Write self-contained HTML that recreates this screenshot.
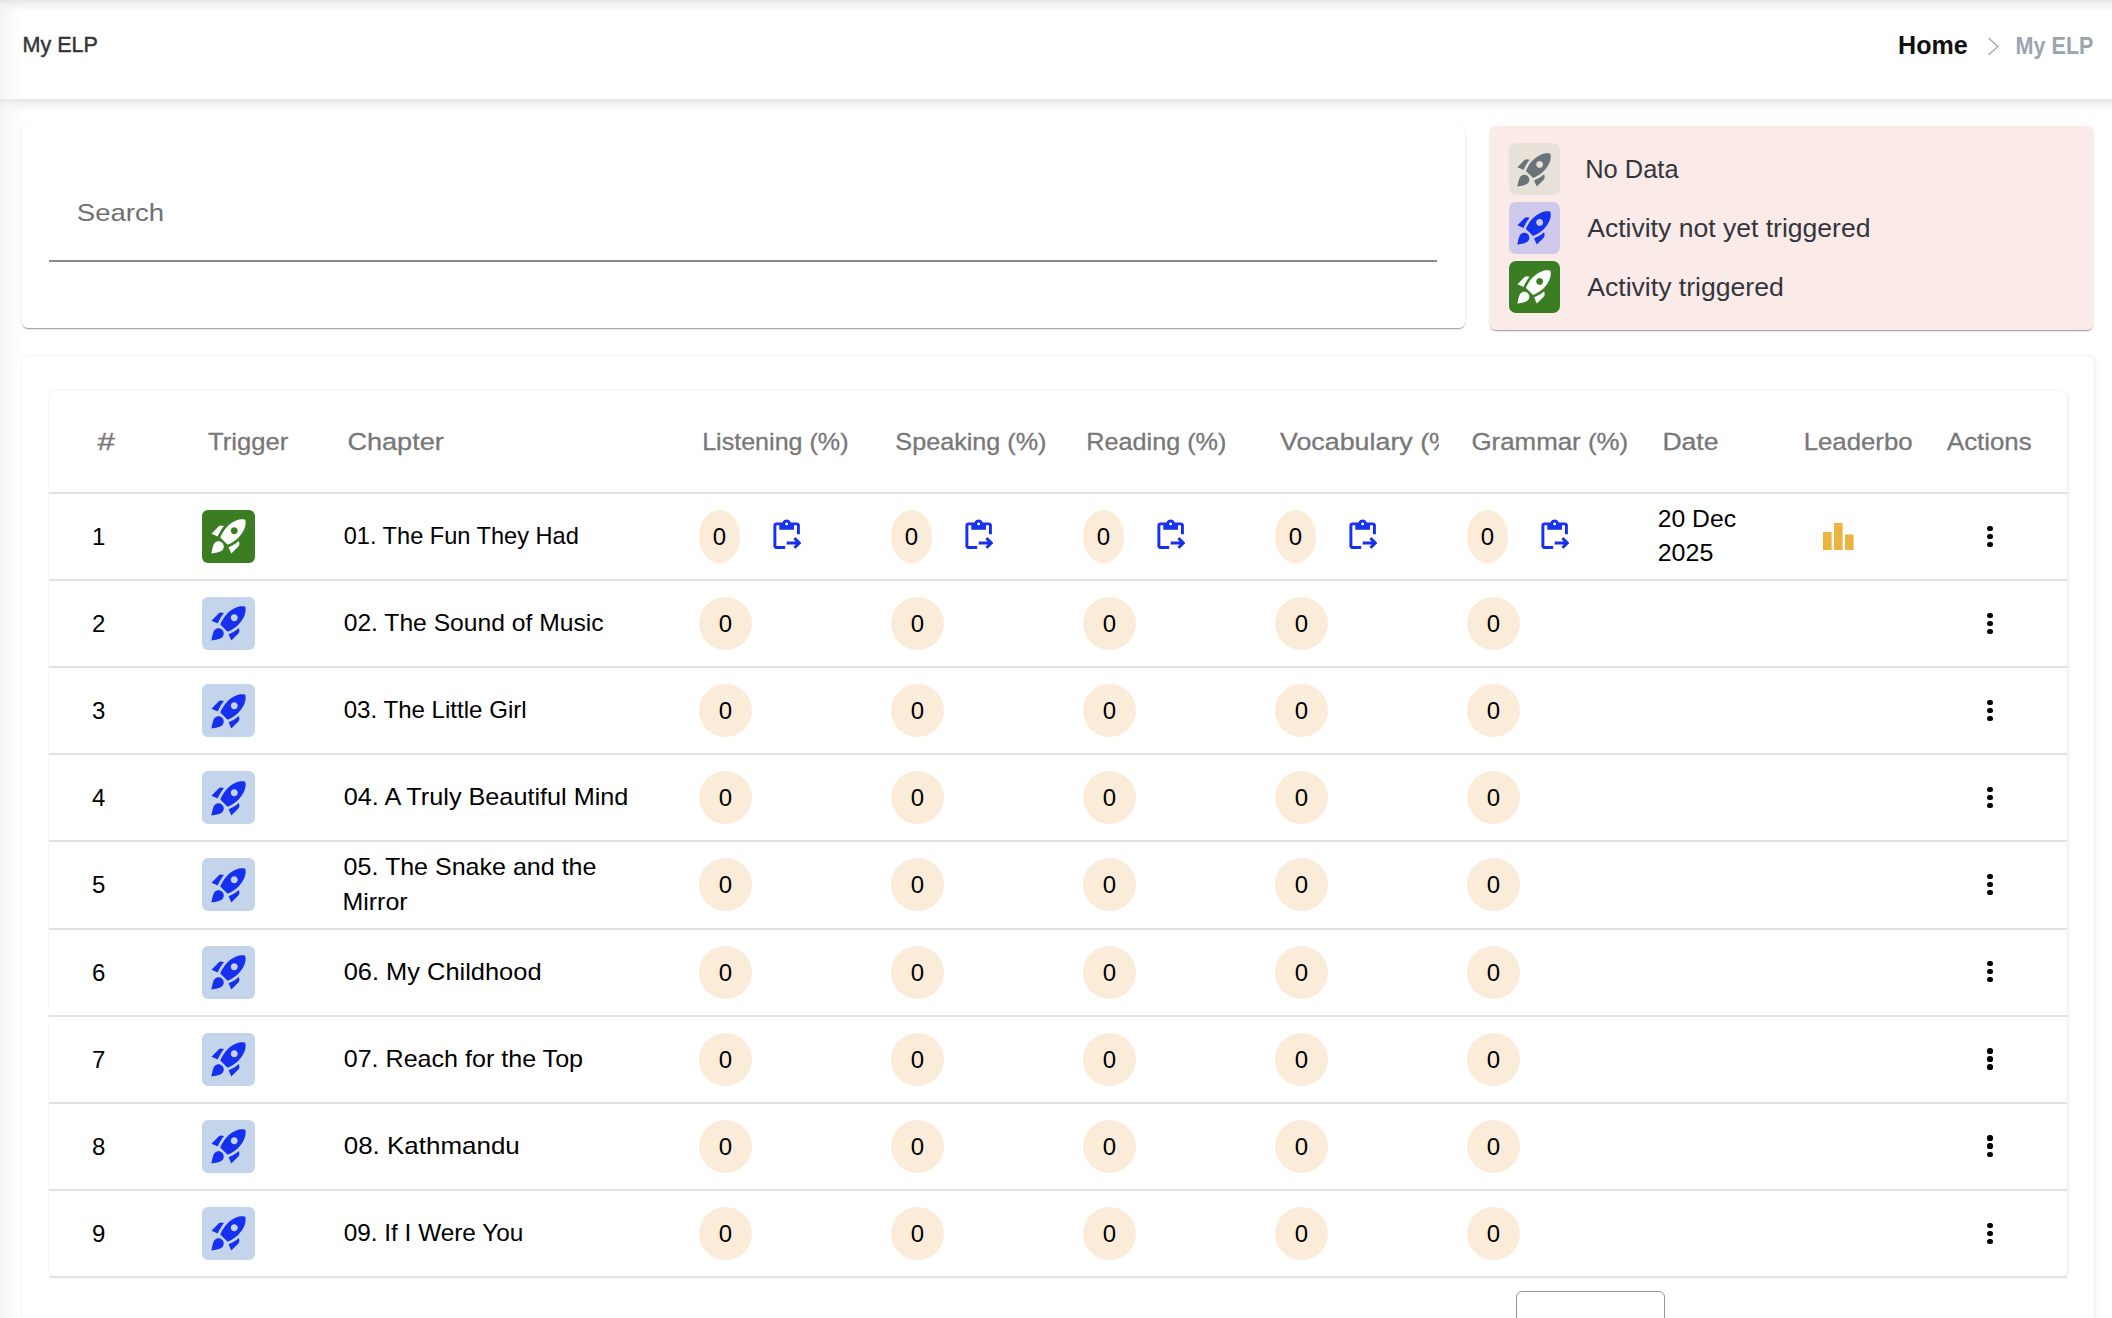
<!DOCTYPE html><html><head><meta charset="utf-8"><title>My ELP</title><style>
*{box-sizing:border-box;margin:0;padding:0}
html,body{width:2112px;height:1318px;overflow:hidden;background:#fff;font-family:"Liberation Sans",sans-serif;}
.abs{position:absolute}
.t{position:absolute;white-space:nowrap;transform-origin:0 0}
#topshade{left:0;top:0;width:2112px;height:12px;background:linear-gradient(#e4e5e6,#f1f1f1 35%,rgba(255,255,255,0));}
#leftshade{left:0;top:0;width:22px;height:1318px;background:linear-gradient(90deg,#f2f3f4,#f8f8f8 5px,#fcfcfc 14px,rgba(255,255,255,0));}
#hshade{left:0;top:99px;width:2112px;height:14px;background:linear-gradient(#e7e7e7,#f3f3f3 35%,rgba(255,255,255,0));}
.card{position:absolute;background:#fff;border-radius:6px;
  box-shadow:0px 2px 1px -1px rgba(0,0,0,0.2),0px 1px 1px 0px rgba(0,0,0,0.14),0px 1px 3px 0px rgba(0,0,0,0.12);}
#search{left:22px;top:125px;width:1443px;height:203px;}
#search .line{position:absolute;left:27px;top:135.4px;width:1388px;height:1.7px;background:#888}
#legend{left:1490px;top:126px;width:603px;height:204px;background:#fbebe8}
.lg{position:absolute;left:1509px;width:51px;height:51.5px;border-radius:7px;display:flex;align-items:center;justify-content:center}
.lgt{font-size:26px;color:#33363d;}
#outer{left:22px;top:355.5px;width:2071.5px;height:1000px;box-shadow:0 0 2px rgba(0,0,0,0.09),2px 1px 5px rgba(0,0,0,0.05);}
#inner{left:49px;top:391px;width:2018px;height:886px;box-shadow:0 0 2px rgba(0,0,0,0.09),2px 1px 5px rgba(0,0,0,0.05);}
.th{font-size:24.5px;color:#777;-webkit-text-stroke:0.3px #777;}
.hr{position:absolute;left:49px;width:2018px;height:2px;background:#e2e2e2}
.cell{font-size:24px;color:#000}
.trig{position:absolute;left:202px;width:53px;height:53px;border-radius:6px;display:flex;align-items:center;justify-content:center}
.badge{position:absolute;width:53px;height:53px;border-radius:50%;background:#fbecda;font-size:24px;color:#000;text-align:center;line-height:53px}
.badge.sq{width:41px}
.dot{position:absolute;width:5.2px;height:5.2px;border-radius:50%;background:#000}
#pager{left:1516px;top:1291px;width:149px;height:60px;border:1.8px solid #959595;border-radius:6px;background:#fff}
</style></head><body>
<div id="leftshade" class="abs"></div><div id="hshade" class="abs"></div><div id="topshade" class="abs"></div>
<div id="title" class="t" style="left:23px;top:31.7px;font-size:22.5px;font-weight:400;color:#333;-webkit-text-stroke:0.45px #333;transform:matrix(0.9584,0,0,1,-0.56,0);">My ELP</div>
<div id="home" class="t" style="left:1897px;top:31px;font-size:25px;font-weight:700;color:#111;transform:matrix(1.0029,0,0,1,1.10,0);">Home</div>
<svg class="abs" style="left:1986.5px;top:36.5px" width="13" height="19" viewBox="0 0 13 19"><path d="M1.5,1 L10.8,9.5 L1.5,18" fill="none" stroke="#a8b1b8" stroke-width="1.6"/></svg>
<div id="crumb" class="t" style="left:2016px;top:31.7px;font-size:24px;font-weight:700;color:#9aa5ae;transform:matrix(0.8976,0,0,1,-0.40,0);">My ELP</div>
<div id="search" class="card"><div class="line"></div></div>
<div id="srch" class="t" style="left:78px;top:199px;font-size:24.8px;color:#707070;transform:matrix(1.1118,0,0,1,-1.21,0);">Search</div>
<div id="legend" class="card"></div>
<div class="lg" style="top:143.4px;background:#e8e1d7"><svg width="41" height="41" viewBox="0 0 24 24" style="display:block"><path fill="#6b737a" fill-rule="evenodd" d="M9.19,6.35c-2.04,2.29-3.44,5.58-3.57,5.89L2,10.69l4.05-4.05c0.47-0.47,1.15-0.68,1.81-0.55L9.19,6.35L9.19,6.35z M11.17,17c0,0,3.74-1.55,5.89-3.7c5.4-5.4,4.5-9.62,4.21-10.57c-0.95-0.3-5.17-1.19-10.57,4.21C8.55,9.09,7,12.83,7,12.83L11.17,17z M17.65,14.81c-2.29,2.04-5.58,3.44-5.89,3.57L13.31,22l4.05-4.05c0.47-0.47,0.68-1.15,0.55-1.81L17.65,14.81L17.65,14.81z M9,18c0,0.83-0.34,1.58-0.88,2.12C6.94,21.3,2,22,2,22s0.7-4.94,1.88-6.12C4.42,15.34,5.17,15,6,15C7.66,15,9,16.34,9,18z M13,9c0-1.1,0.9-2,2-2s2,0.9,2,2s-0.9,2-2,2S13,10.1,13,9z"/></svg></div>
<div id="lg0" class="t lgt" style="left:1587px;top:154.4px;transform:matrix(0.9787,0,0,1,-1.76,0);">No Data</div>
<div class="lg" style="top:202.2px;background:#cfc9ec"><svg width="41" height="41" viewBox="0 0 24 24" style="display:block"><path fill="#1533ee" fill-rule="evenodd" d="M9.19,6.35c-2.04,2.29-3.44,5.58-3.57,5.89L2,10.69l4.05-4.05c0.47-0.47,1.15-0.68,1.81-0.55L9.19,6.35L9.19,6.35z M11.17,17c0,0,3.74-1.55,5.89-3.7c5.4-5.4,4.5-9.62,4.21-10.57c-0.95-0.3-5.17-1.19-10.57,4.21C8.55,9.09,7,12.83,7,12.83L11.17,17z M17.65,14.81c-2.29,2.04-5.58,3.44-5.89,3.57L13.31,22l4.05-4.05c0.47-0.47,0.68-1.15,0.55-1.81L17.65,14.81L17.65,14.81z M9,18c0,0.83-0.34,1.58-0.88,2.12C6.94,21.3,2,22,2,22s0.7-4.94,1.88-6.12C4.42,15.34,5.17,15,6,15C7.66,15,9,16.34,9,18z M13,9c0-1.1,0.9-2,2-2s2,0.9,2,2s-0.9,2-2,2S13,10.1,13,9z"/></svg></div>
<div id="lg1" class="t lgt" style="left:1587px;top:213.2px;transform:matrix(1.0210,0,0,1,0.20,0);">Activity not yet triggered</div>
<div class="lg" style="top:261px;background:#3b7d23"><svg width="41" height="41" viewBox="0 0 24 24" style="display:block"><path fill="#ffffff" fill-rule="evenodd" d="M9.19,6.35c-2.04,2.29-3.44,5.58-3.57,5.89L2,10.69l4.05-4.05c0.47-0.47,1.15-0.68,1.81-0.55L9.19,6.35L9.19,6.35z M11.17,17c0,0,3.74-1.55,5.89-3.7c5.4-5.4,4.5-9.62,4.21-10.57c-0.95-0.3-5.17-1.19-10.57,4.21C8.55,9.09,7,12.83,7,12.83L11.17,17z M17.65,14.81c-2.29,2.04-5.58,3.44-5.89,3.57L13.31,22l4.05-4.05c0.47-0.47,0.68-1.15,0.55-1.81L17.65,14.81L17.65,14.81z M9,18c0,0.83-0.34,1.58-0.88,2.12C6.94,21.3,2,22,2,22s0.7-4.94,1.88-6.12C4.42,15.34,5.17,15,6,15C7.66,15,9,16.34,9,18z M13,9c0-1.1,0.9-2,2-2s2,0.9,2,2s-0.9,2-2,2S13,10.1,13,9z"/></svg></div>
<div id="lg2" class="t lgt" style="left:1587px;top:272px;transform:matrix(1.0230,0,0,1,0.20,0);">Activity triggered</div>
<div id="outer" class="card"></div>
<div id="inner" class="card"></div>
<div id="h0" class="t th" style="left:97px;top:428px;transform:matrix(1.2786,0,0,1,0.60,0);">#</div>
<div id="h1" class="t th" style="left:207px;top:428px;transform:matrix(1.0455,0,0,1,1.00,0);">Trigger</div>
<div id="h2" class="t th" style="left:348px;top:428px;transform:matrix(1.1058,0,0,1,-0.61,0);">Chapter</div>
<div id="h3" class="t th" style="left:704px;top:428px;transform:matrix(1.0236,0,0,1,-1.85,0);">Listening (%)</div>
<div id="h4" class="t th" style="left:896px;top:428px;transform:matrix(1.0269,0,0,1,-0.63,0);">Speaking (%)</div>
<div id="h5" class="t th" style="left:1088px;top:428px;transform:matrix(1.0286,0,0,1,-1.66,0);">Reading (%)</div>
<div class="abs" style="left:1270px;top:420px;width:169px;height:40px;overflow:hidden"><div id="h6" class="t th" style="left:10.4px;top:8px;transform:matrix(1.095,0,0,1,0.0,0)">Vocabulary (%)</div></div>
<div id="h7" class="t th" style="left:1472px;top:428px;transform:matrix(1.0562,0,0,1,-0.56,0);">Grammar (%)</div>
<div id="h8" class="t th" style="left:1664px;top:428px;transform:matrix(1.0837,0,0,1,-1.57,0);">Date</div>
<div id="h9" class="t th" style="left:1805px;top:428px;transform:matrix(1.0515,0,0,1,-1.30,0);">Leaderbo</div>
<div id="h10" class="t th" style="left:1946px;top:428px;transform:matrix(1.0544,0,0,1,0.90,0);">Actions</div>
<div class="hr" style="top:491.8px"></div>
<div id="n0" class="t cell" style="left:92px;top:527.8px;line-height:17px;">1</div>
<div class="trig" style="top:509.8px;background:#3b7d23"><svg width="42" height="42" viewBox="0 0 24 24" style="display:block"><path fill="#fff" fill-rule="evenodd" d="M9.19,6.35c-2.04,2.29-3.44,5.58-3.57,5.89L2,10.69l4.05-4.05c0.47-0.47,1.15-0.68,1.81-0.55L9.19,6.35L9.19,6.35z M11.17,17c0,0,3.74-1.55,5.89-3.7c5.4-5.4,4.5-9.62,4.21-10.57c-0.95-0.3-5.17-1.19-10.57,4.21C8.55,9.09,7,12.83,7,12.83L11.17,17z M17.65,14.81c-2.29,2.04-5.58,3.44-5.89,3.57L13.31,22l4.05-4.05c0.47-0.47,0.68-1.15,0.55-1.81L17.65,14.81L17.65,14.81z M9,18c0,0.83-0.34,1.58-0.88,2.12C6.94,21.3,2,22,2,22s0.7-4.94,1.88-6.12C4.42,15.34,5.17,15,6,15C7.66,15,9,16.34,9,18z M13,9c0-1.1,0.9-2,2-2s2,0.9,2,2s-0.9,2-2,2S13,10.1,13,9z"/></svg></div>
<div id="c0" class="t cell" style="left:343px;top:518.8px;line-height:34.5px;transform:matrix(0.9828,0,0,1,0.70,0);">01. The Fun They Had</div>
<div class="badge sq" style="left:699px;top:509.8px">0</div>
<div class="abs" style="left:769.4px;top:518.4px"><svg width="35.3" height="35.3" viewBox="0 0 24 24" style="display:block"><path fill="#1530ee" fill-rule="evenodd" d="M5,5h2v3h10V5h2v6h2V5c0-1.1-0.9-2-2-2h-4.18C14.4,1.84,13.3,1,12,1S9.6,1.84,9.18,3H5C3.9,3,3,3.9,3,5v14c0,1.1,0.9,2,2,2h6v-2H5V5z M12,5c-0.55,0-1-0.45-1-1s0.45-1,1-1s1,0.45,1,1S12.55,5,12,5z M18.01,13l-1.42,1.41l1.57,1.58H12v2h6.18l-1.58,1.58l1.42,1.42l3.99-4.01L18.01,13z"/></svg></div>
<div class="badge sq" style="left:891px;top:509.8px">0</div>
<div class="abs" style="left:961.4px;top:518.4px"><svg width="35.3" height="35.3" viewBox="0 0 24 24" style="display:block"><path fill="#1530ee" fill-rule="evenodd" d="M5,5h2v3h10V5h2v6h2V5c0-1.1-0.9-2-2-2h-4.18C14.4,1.84,13.3,1,12,1S9.6,1.84,9.18,3H5C3.9,3,3,3.9,3,5v14c0,1.1,0.9,2,2,2h6v-2H5V5z M12,5c-0.55,0-1-0.45-1-1s0.45-1,1-1s1,0.45,1,1S12.55,5,12,5z M18.01,13l-1.42,1.41l1.57,1.58H12v2h6.18l-1.58,1.58l1.42,1.42l3.99-4.01L18.01,13z"/></svg></div>
<div class="badge sq" style="left:1083px;top:509.8px">0</div>
<div class="abs" style="left:1153.4px;top:518.4px"><svg width="35.3" height="35.3" viewBox="0 0 24 24" style="display:block"><path fill="#1530ee" fill-rule="evenodd" d="M5,5h2v3h10V5h2v6h2V5c0-1.1-0.9-2-2-2h-4.18C14.4,1.84,13.3,1,12,1S9.6,1.84,9.18,3H5C3.9,3,3,3.9,3,5v14c0,1.1,0.9,2,2,2h6v-2H5V5z M12,5c-0.55,0-1-0.45-1-1s0.45-1,1-1s1,0.45,1,1S12.55,5,12,5z M18.01,13l-1.42,1.41l1.57,1.58H12v2h6.18l-1.58,1.58l1.42,1.42l3.99-4.01L18.01,13z"/></svg></div>
<div class="badge sq" style="left:1275px;top:509.8px">0</div>
<div class="abs" style="left:1345.4px;top:518.4px"><svg width="35.3" height="35.3" viewBox="0 0 24 24" style="display:block"><path fill="#1530ee" fill-rule="evenodd" d="M5,5h2v3h10V5h2v6h2V5c0-1.1-0.9-2-2-2h-4.18C14.4,1.84,13.3,1,12,1S9.6,1.84,9.18,3H5C3.9,3,3,3.9,3,5v14c0,1.1,0.9,2,2,2h6v-2H5V5z M12,5c-0.55,0-1-0.45-1-1s0.45-1,1-1s1,0.45,1,1S12.55,5,12,5z M18.01,13l-1.42,1.41l1.57,1.58H12v2h6.18l-1.58,1.58l1.42,1.42l3.99-4.01L18.01,13z"/></svg></div>
<div class="badge sq" style="left:1467px;top:509.8px">0</div>
<div class="abs" style="left:1537.4px;top:518.4px"><svg width="35.3" height="35.3" viewBox="0 0 24 24" style="display:block"><path fill="#1530ee" fill-rule="evenodd" d="M5,5h2v3h10V5h2v6h2V5c0-1.1-0.9-2-2-2h-4.18C14.4,1.84,13.3,1,12,1S9.6,1.84,9.18,3H5C3.9,3,3,3.9,3,5v14c0,1.1,0.9,2,2,2h6v-2H5V5z M12,5c-0.55,0-1-0.45-1-1s0.45-1,1-1s1,0.45,1,1S12.55,5,12,5z M18.01,13l-1.42,1.41l1.57,1.58H12v2h6.18l-1.58,1.58l1.42,1.42l3.99-4.01L18.01,13z"/></svg></div>
<div id="d0" class="t cell" style="left:1658px;top:501.8px;line-height:34.5px;transform:matrix(1.0300,0,0,1,-0.28,0);">20 Dec</div>
<div id="d1" class="t cell" style="left:1658px;top:536.3px;line-height:34.5px;transform:matrix(1.0413,0,0,1,-0.29,0);">2025</div>
<svg class="abs" style="left:1823px;top:522.8px" width="31" height="27" viewBox="0 0 31 27"><rect x="0" y="9" width="8.6" height="18" fill="#ebb440"/><rect x="11" y="0" width="8.6" height="27" fill="#ebb440"/><rect x="22" y="11.5" width="8.6" height="15.5" fill="#ebb440"/></svg>
<div class="dot" style="left:1987.4px;top:525.50px"></div>
<div class="dot" style="left:1987.4px;top:533.50px"></div>
<div class="dot" style="left:1987.4px;top:541.60px"></div>
<div class="hr" style="top:578.94px"></div>
<div id="n1" class="t cell" style="left:92px;top:614.94px;line-height:17px;">2</div>
<div class="trig" style="top:596.94px;background:#c4d4ea"><svg width="42" height="42" viewBox="0 0 24 24" style="display:block"><path fill="#1530ee" fill-rule="evenodd" d="M9.19,6.35c-2.04,2.29-3.44,5.58-3.57,5.89L2,10.69l4.05-4.05c0.47-0.47,1.15-0.68,1.81-0.55L9.19,6.35L9.19,6.35z M11.17,17c0,0,3.74-1.55,5.89-3.7c5.4-5.4,4.5-9.62,4.21-10.57c-0.95-0.3-5.17-1.19-10.57,4.21C8.55,9.09,7,12.83,7,12.83L11.17,17z M17.65,14.81c-2.29,2.04-5.58,3.44-5.89,3.57L13.31,22l4.05-4.05c0.47-0.47,0.68-1.15,0.55-1.81L17.65,14.81L17.65,14.81z M9,18c0,0.83-0.34,1.58-0.88,2.12C6.94,21.3,2,22,2,22s0.7-4.94,1.88-6.12C4.42,15.34,5.17,15,6,15C7.66,15,9,16.34,9,18z M13,9c0-1.1,0.9-2,2-2s2,0.9,2,2s-0.9,2-2,2S13,10.1,13,9z"/></svg></div>
<div id="c1" class="t cell" style="left:343px;top:605.94px;line-height:34.5px;transform:matrix(1.0269,0,0,1,0.70,0);">02. The Sound of Music</div>
<div class="badge" style="left:699px;top:596.94px">0</div>
<div class="badge" style="left:891px;top:596.94px">0</div>
<div class="badge" style="left:1083px;top:596.94px">0</div>
<div class="badge" style="left:1275px;top:596.94px">0</div>
<div class="badge" style="left:1467px;top:596.94px">0</div>
<div class="dot" style="left:1987.4px;top:612.64px"></div>
<div class="dot" style="left:1987.4px;top:620.64px"></div>
<div class="dot" style="left:1987.4px;top:628.74px"></div>
<div class="hr" style="top:666.08px"></div>
<div id="n2" class="t cell" style="left:92px;top:702.08px;line-height:17px;">3</div>
<div class="trig" style="top:684.08px;background:#c4d4ea"><svg width="42" height="42" viewBox="0 0 24 24" style="display:block"><path fill="#1530ee" fill-rule="evenodd" d="M9.19,6.35c-2.04,2.29-3.44,5.58-3.57,5.89L2,10.69l4.05-4.05c0.47-0.47,1.15-0.68,1.81-0.55L9.19,6.35L9.19,6.35z M11.17,17c0,0,3.74-1.55,5.89-3.7c5.4-5.4,4.5-9.62,4.21-10.57c-0.95-0.3-5.17-1.19-10.57,4.21C8.55,9.09,7,12.83,7,12.83L11.17,17z M17.65,14.81c-2.29,2.04-5.58,3.44-5.89,3.57L13.31,22l4.05-4.05c0.47-0.47,0.68-1.15,0.55-1.81L17.65,14.81L17.65,14.81z M9,18c0,0.83-0.34,1.58-0.88,2.12C6.94,21.3,2,22,2,22s0.7-4.94,1.88-6.12C4.42,15.34,5.17,15,6,15C7.66,15,9,16.34,9,18z M13,9c0-1.1,0.9-2,2-2s2,0.9,2,2s-0.9,2-2,2S13,10.1,13,9z"/></svg></div>
<div id="c2" class="t cell" style="left:343px;top:693.08px;line-height:34.5px;transform:matrix(1.0033,0,0,1,0.70,0);">03. The Little Girl</div>
<div class="badge" style="left:699px;top:684.08px">0</div>
<div class="badge" style="left:891px;top:684.08px">0</div>
<div class="badge" style="left:1083px;top:684.08px">0</div>
<div class="badge" style="left:1275px;top:684.08px">0</div>
<div class="badge" style="left:1467px;top:684.08px">0</div>
<div class="dot" style="left:1987.4px;top:699.78px"></div>
<div class="dot" style="left:1987.4px;top:707.78px"></div>
<div class="dot" style="left:1987.4px;top:715.88px"></div>
<div class="hr" style="top:753.22px"></div>
<div id="n3" class="t cell" style="left:92px;top:789.22px;line-height:17px;">4</div>
<div class="trig" style="top:771.22px;background:#c4d4ea"><svg width="42" height="42" viewBox="0 0 24 24" style="display:block"><path fill="#1530ee" fill-rule="evenodd" d="M9.19,6.35c-2.04,2.29-3.44,5.58-3.57,5.89L2,10.69l4.05-4.05c0.47-0.47,1.15-0.68,1.81-0.55L9.19,6.35L9.19,6.35z M11.17,17c0,0,3.74-1.55,5.89-3.7c5.4-5.4,4.5-9.62,4.21-10.57c-0.95-0.3-5.17-1.19-10.57,4.21C8.55,9.09,7,12.83,7,12.83L11.17,17z M17.65,14.81c-2.29,2.04-5.58,3.44-5.89,3.57L13.31,22l4.05-4.05c0.47-0.47,0.68-1.15,0.55-1.81L17.65,14.81L17.65,14.81z M9,18c0,0.83-0.34,1.58-0.88,2.12C6.94,21.3,2,22,2,22s0.7-4.94,1.88-6.12C4.42,15.34,5.17,15,6,15C7.66,15,9,16.34,9,18z M13,9c0-1.1,0.9-2,2-2s2,0.9,2,2s-0.9,2-2,2S13,10.1,13,9z"/></svg></div>
<div id="c3" class="t cell" style="left:343px;top:780.22px;line-height:34.5px;transform:matrix(1.0511,0,0,1,0.70,0);">04. A Truly Beautiful Mind</div>
<div class="badge" style="left:699px;top:771.22px">0</div>
<div class="badge" style="left:891px;top:771.22px">0</div>
<div class="badge" style="left:1083px;top:771.22px">0</div>
<div class="badge" style="left:1275px;top:771.22px">0</div>
<div class="badge" style="left:1467px;top:771.22px">0</div>
<div class="dot" style="left:1987.4px;top:786.92px"></div>
<div class="dot" style="left:1987.4px;top:794.92px"></div>
<div class="dot" style="left:1987.4px;top:803.02px"></div>
<div class="hr" style="top:840.36px"></div>
<div id="n4" class="t cell" style="left:92px;top:876.36px;line-height:17px;">5</div>
<div class="trig" style="top:858.36px;background:#c4d4ea"><svg width="42" height="42" viewBox="0 0 24 24" style="display:block"><path fill="#1530ee" fill-rule="evenodd" d="M9.19,6.35c-2.04,2.29-3.44,5.58-3.57,5.89L2,10.69l4.05-4.05c0.47-0.47,1.15-0.68,1.81-0.55L9.19,6.35L9.19,6.35z M11.17,17c0,0,3.74-1.55,5.89-3.7c5.4-5.4,4.5-9.62,4.21-10.57c-0.95-0.3-5.17-1.19-10.57,4.21C8.55,9.09,7,12.83,7,12.83L11.17,17z M17.65,14.81c-2.29,2.04-5.58,3.44-5.89,3.57L13.31,22l4.05-4.05c0.47-0.47,0.68-1.15,0.55-1.81L17.65,14.81L17.65,14.81z M9,18c0,0.83-0.34,1.58-0.88,2.12C6.94,21.3,2,22,2,22s0.7-4.94,1.88-6.12C4.42,15.34,5.17,15,6,15C7.66,15,9,16.34,9,18z M13,9c0-1.1,0.9-2,2-2s2,0.9,2,2s-0.9,2-2,2S13,10.1,13,9z"/></svg></div>
<div id="c4" class="t cell" style="left:343px;top:850.36px;line-height:34.5px;transform:matrix(1.0430,0,0,1,0.60,0);">05. The Snake and the</div>
<div id="c4b" class="t cell" style="left:343px;top:884.86px;line-height:34.5px;transform:matrix(1.0371,0,0,1,-0.44,0);">Mirror</div>
<div class="badge" style="left:699px;top:858.36px">0</div>
<div class="badge" style="left:891px;top:858.36px">0</div>
<div class="badge" style="left:1083px;top:858.36px">0</div>
<div class="badge" style="left:1275px;top:858.36px">0</div>
<div class="badge" style="left:1467px;top:858.36px">0</div>
<div class="dot" style="left:1987.4px;top:874.06px"></div>
<div class="dot" style="left:1987.4px;top:882.06px"></div>
<div class="dot" style="left:1987.4px;top:890.16px"></div>
<div class="hr" style="top:927.50px"></div>
<div id="n5" class="t cell" style="left:92px;top:963.5px;line-height:17px;">6</div>
<div class="trig" style="top:945.5px;background:#c4d4ea"><svg width="42" height="42" viewBox="0 0 24 24" style="display:block"><path fill="#1530ee" fill-rule="evenodd" d="M9.19,6.35c-2.04,2.29-3.44,5.58-3.57,5.89L2,10.69l4.05-4.05c0.47-0.47,1.15-0.68,1.81-0.55L9.19,6.35L9.19,6.35z M11.17,17c0,0,3.74-1.55,5.89-3.7c5.4-5.4,4.5-9.62,4.21-10.57c-0.95-0.3-5.17-1.19-10.57,4.21C8.55,9.09,7,12.83,7,12.83L11.17,17z M17.65,14.81c-2.29,2.04-5.58,3.44-5.89,3.57L13.31,22l4.05-4.05c0.47-0.47,0.68-1.15,0.55-1.81L17.65,14.81L17.65,14.81z M9,18c0,0.83-0.34,1.58-0.88,2.12C6.94,21.3,2,22,2,22s0.7-4.94,1.88-6.12C4.42,15.34,5.17,15,6,15C7.66,15,9,16.34,9,18z M13,9c0-1.1,0.9-2,2-2s2,0.9,2,2s-0.9,2-2,2S13,10.1,13,9z"/></svg></div>
<div id="c5" class="t cell" style="left:343px;top:954.5px;line-height:34.5px;transform:matrix(1.0591,0,0,1,0.70,0);">06. My Childhood</div>
<div class="badge" style="left:699px;top:945.5px">0</div>
<div class="badge" style="left:891px;top:945.5px">0</div>
<div class="badge" style="left:1083px;top:945.5px">0</div>
<div class="badge" style="left:1275px;top:945.5px">0</div>
<div class="badge" style="left:1467px;top:945.5px">0</div>
<div class="dot" style="left:1987.4px;top:961.20px"></div>
<div class="dot" style="left:1987.4px;top:969.20px"></div>
<div class="dot" style="left:1987.4px;top:977.30px"></div>
<div class="hr" style="top:1014.64px"></div>
<div id="n6" class="t cell" style="left:92px;top:1050.64px;line-height:17px;">7</div>
<div class="trig" style="top:1032.64px;background:#c4d4ea"><svg width="42" height="42" viewBox="0 0 24 24" style="display:block"><path fill="#1530ee" fill-rule="evenodd" d="M9.19,6.35c-2.04,2.29-3.44,5.58-3.57,5.89L2,10.69l4.05-4.05c0.47-0.47,1.15-0.68,1.81-0.55L9.19,6.35L9.19,6.35z M11.17,17c0,0,3.74-1.55,5.89-3.7c5.4-5.4,4.5-9.62,4.21-10.57c-0.95-0.3-5.17-1.19-10.57,4.21C8.55,9.09,7,12.83,7,12.83L11.17,17z M17.65,14.81c-2.29,2.04-5.58,3.44-5.89,3.57L13.31,22l4.05-4.05c0.47-0.47,0.68-1.15,0.55-1.81L17.65,14.81L17.65,14.81z M9,18c0,0.83-0.34,1.58-0.88,2.12C6.94,21.3,2,22,2,22s0.7-4.94,1.88-6.12C4.42,15.34,5.17,15,6,15C7.66,15,9,16.34,9,18z M13,9c0-1.1,0.9-2,2-2s2,0.9,2,2s-0.9,2-2,2S13,10.1,13,9z"/></svg></div>
<div id="c6" class="t cell" style="left:343px;top:1041.64px;line-height:34.5px;transform:matrix(1.0450,0,0,1,0.70,0);">07. Reach for the Top</div>
<div class="badge" style="left:699px;top:1032.64px">0</div>
<div class="badge" style="left:891px;top:1032.64px">0</div>
<div class="badge" style="left:1083px;top:1032.64px">0</div>
<div class="badge" style="left:1275px;top:1032.64px">0</div>
<div class="badge" style="left:1467px;top:1032.64px">0</div>
<div class="dot" style="left:1987.4px;top:1048.34px"></div>
<div class="dot" style="left:1987.4px;top:1056.34px"></div>
<div class="dot" style="left:1987.4px;top:1064.44px"></div>
<div class="hr" style="top:1101.78px"></div>
<div id="n7" class="t cell" style="left:92px;top:1137.78px;line-height:17px;">8</div>
<div class="trig" style="top:1119.78px;background:#c4d4ea"><svg width="42" height="42" viewBox="0 0 24 24" style="display:block"><path fill="#1530ee" fill-rule="evenodd" d="M9.19,6.35c-2.04,2.29-3.44,5.58-3.57,5.89L2,10.69l4.05-4.05c0.47-0.47,1.15-0.68,1.81-0.55L9.19,6.35L9.19,6.35z M11.17,17c0,0,3.74-1.55,5.89-3.7c5.4-5.4,4.5-9.62,4.21-10.57c-0.95-0.3-5.17-1.19-10.57,4.21C8.55,9.09,7,12.83,7,12.83L11.17,17z M17.65,14.81c-2.29,2.04-5.58,3.44-5.89,3.57L13.31,22l4.05-4.05c0.47-0.47,0.68-1.15,0.55-1.81L17.65,14.81L17.65,14.81z M9,18c0,0.83-0.34,1.58-0.88,2.12C6.94,21.3,2,22,2,22s0.7-4.94,1.88-6.12C4.42,15.34,5.17,15,6,15C7.66,15,9,16.34,9,18z M13,9c0-1.1,0.9-2,2-2s2,0.9,2,2s-0.9,2-2,2S13,10.1,13,9z"/></svg></div>
<div id="c7" class="t cell" style="left:343px;top:1128.78px;line-height:34.5px;transform:matrix(1.0815,0,0,1,0.70,0);">08. Kathmandu</div>
<div class="badge" style="left:699px;top:1119.78px">0</div>
<div class="badge" style="left:891px;top:1119.78px">0</div>
<div class="badge" style="left:1083px;top:1119.78px">0</div>
<div class="badge" style="left:1275px;top:1119.78px">0</div>
<div class="badge" style="left:1467px;top:1119.78px">0</div>
<div class="dot" style="left:1987.4px;top:1135.48px"></div>
<div class="dot" style="left:1987.4px;top:1143.48px"></div>
<div class="dot" style="left:1987.4px;top:1151.58px"></div>
<div class="hr" style="top:1188.92px"></div>
<div id="n8" class="t cell" style="left:92px;top:1224.92px;line-height:17px;">9</div>
<div class="trig" style="top:1206.92px;background:#c4d4ea"><svg width="42" height="42" viewBox="0 0 24 24" style="display:block"><path fill="#1530ee" fill-rule="evenodd" d="M9.19,6.35c-2.04,2.29-3.44,5.58-3.57,5.89L2,10.69l4.05-4.05c0.47-0.47,1.15-0.68,1.81-0.55L9.19,6.35L9.19,6.35z M11.17,17c0,0,3.74-1.55,5.89-3.7c5.4-5.4,4.5-9.62,4.21-10.57c-0.95-0.3-5.17-1.19-10.57,4.21C8.55,9.09,7,12.83,7,12.83L11.17,17z M17.65,14.81c-2.29,2.04-5.58,3.44-5.89,3.57L13.31,22l4.05-4.05c0.47-0.47,0.68-1.15,0.55-1.81L17.65,14.81L17.65,14.81z M9,18c0,0.83-0.34,1.58-0.88,2.12C6.94,21.3,2,22,2,22s0.7-4.94,1.88-6.12C4.42,15.34,5.17,15,6,15C7.66,15,9,16.34,9,18z M13,9c0-1.1,0.9-2,2-2s2,0.9,2,2s-0.9,2-2,2S13,10.1,13,9z"/></svg></div>
<div id="c8" class="t cell" style="left:343px;top:1215.92px;line-height:34.5px;transform:matrix(1.0148,0,0,1,0.70,0);">09. If I Were You</div>
<div class="badge" style="left:699px;top:1206.92px">0</div>
<div class="badge" style="left:891px;top:1206.92px">0</div>
<div class="badge" style="left:1083px;top:1206.92px">0</div>
<div class="badge" style="left:1275px;top:1206.92px">0</div>
<div class="badge" style="left:1467px;top:1206.92px">0</div>
<div class="dot" style="left:1987.4px;top:1222.62px"></div>
<div class="dot" style="left:1987.4px;top:1230.62px"></div>
<div class="dot" style="left:1987.4px;top:1238.72px"></div>
<div class="hr" style="top:1276.06px"></div>
<div id="pager" class="abs"></div>
</body></html>
